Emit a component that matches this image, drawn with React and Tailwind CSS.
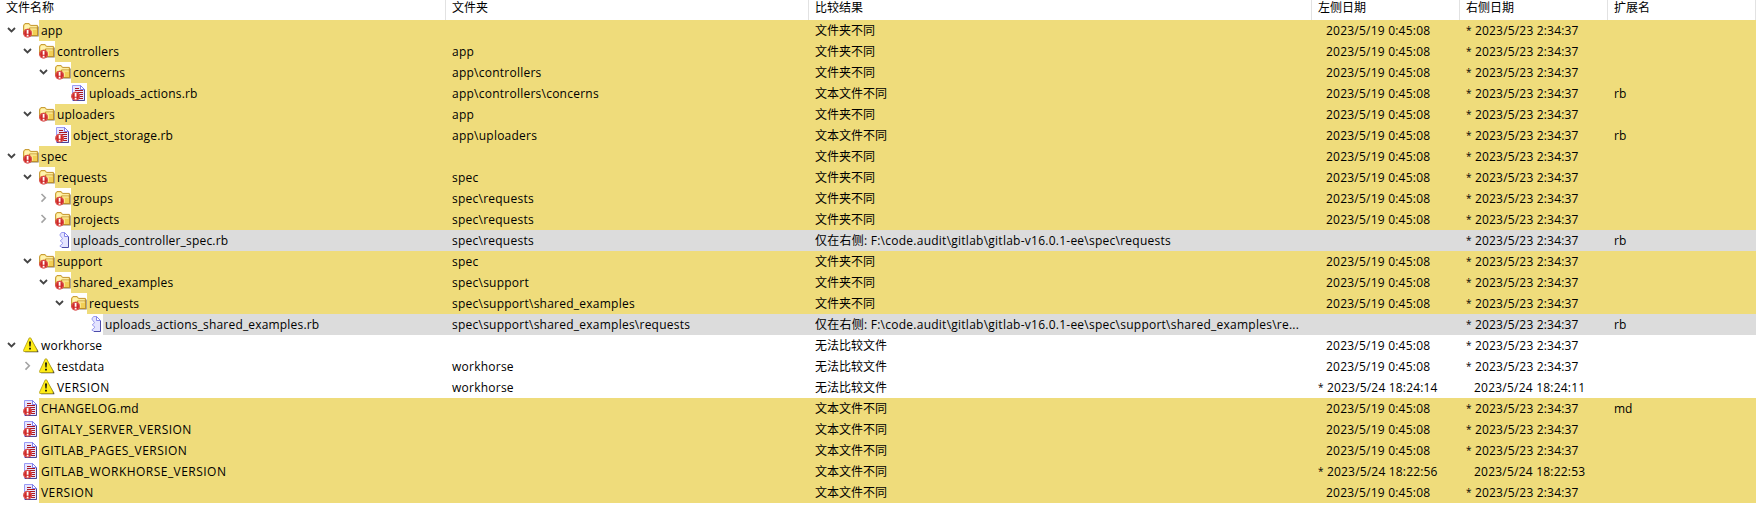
const L = '2023/5/19 0:45:08';
const R = '* 2023/5/23 2:34:37';
const DIR = '文件夹不同';
const TXT = '文本文件不同';
const NOCMP = '无法比较文件';
const ONLY = '仅在右侧: F:\\code.audit\\gitlab\\gitlab-v16.0.1-ee\\spec\\';

// depth, toggle, icon, name, folder, result, left date, right date, extension
const rows = [
  [0, 'open', 'folder', 'app', '', DIR, L, R, ''],
  [1, 'open', 'folder', 'controllers', 'app', DIR, L, R, ''],
  [2, 'open', 'folder', 'concerns', 'app\\controllers', DIR, L, R, ''],
  [3, '', 'text', 'uploads_actions.rb', 'app\\controllers\\concerns', TXT, L, R, 'rb'],
  [1, 'open', 'folder', 'uploaders', 'app', DIR, L, R, ''],
  [2, '', 'text', 'object_storage.rb', 'app\\uploaders', TXT, L, R, 'rb'],
  [0, 'open', 'folder', 'spec', '', DIR, L, R, ''],
  [1, 'open', 'folder', 'requests', 'spec', DIR, L, R, ''],
  [2, 'closed', 'folder', 'groups', 'spec\\requests', DIR, L, R, ''],
  [2, 'closed', 'folder', 'projects', 'spec\\requests', DIR, L, R, ''],
  [2, '', 'single', 'uploads_controller_spec.rb', 'spec\\requests', ONLY + 'requests', '', R, 'rb'],
  [1, 'open', 'folder', 'support', 'spec', DIR, L, R, ''],
  [2, 'open', 'folder', 'shared_examples', 'spec\\support', DIR, L, R, ''],
  [3, 'open', 'folder', 'requests', 'spec\\support\\shared_examples', DIR, L, R, ''],
  [4, '', 'single', 'uploads_actions_shared_examples.rb', 'spec\\support\\shared_examples\\requests', ONLY + 'support\\shared_examples\\re...', '', R, 'rb'],
  [0, 'open', 'warning', 'workhorse', '', NOCMP, L, R, ''],
  [1, 'closed', 'warning', 'testdata', 'workhorse', NOCMP, L, R, ''],
  [1, '', 'warning', 'VERSION', 'workhorse', NOCMP, '* 2023/5/24 18:24:14', '2023/5/24 18:24:11', ''],
  [0, '', 'text', 'CHANGELOG.md', '', TXT, L, R, 'md'],
  [0, '', 'text', 'GITALY_SERVER_VERSION', '', TXT, L, R, ''],
  [0, '', 'text', 'GITLAB_PAGES_VERSION', '', TXT, L, R, ''],
  [0, '', 'text', 'GITLAB_WORKHORSE_VERSION', '', TXT, '* 2023/5/24 18:22:56', '2023/5/24 18:22:53', ''],
  [0, '', 'text', 'VERSION', '', TXT, L, R, ''],
];

const indents = ['w-0', 'w-4', 'w-8', 'w-12', 'w-16'];
const fills = { folder: 'bg-[#efdc7b]', text: 'bg-[#efdc7b]', single: 'bg-[#dcdcdc]', warning: 'bg-white' };

function Badge() {
  return (
    <g>
      <circle cx="4.6" cy="11.2" r="4.4" fill="#cf2a2a" />
      <circle cx="4.6" cy="11.2" r="3.9" fill="none" stroke="#e87570" strokeWidth=".6" />
      <path d="M3.7 8h1.8v3.8H3.7zM3.7 12.8h1.8v1.6H3.7z" fill="#fff" />
    </g>
  );
}

function Icon({ kind }) {
  const cls = 'block h-4 w-4 shrink-0';
  if (kind === 'folder') {
    return (
      <svg className={cls} viewBox="0 0 16 16">
        <path d="M14 4.5h1.7v10H5v-1h9z" fill="#8b8064" />
        <path d="M.6 11V3.2L1.9 1.6h4.3l1.3 1.8h6.9v10H2z" fill="#f6da70" stroke="#c4962d" strokeWidth="1" />
        <path d="M1.5 4.5 2.4 2.5h3.4L7 4.2h6.6v1.2H6L4.5 7h-3z" fill="#fff3ae" />
        <path d="M6.5 6h8v7.5H6z" fill="#f2cf55" stroke="#b88624" strokeWidth=".8" />
        <path d="M7.3 7h6.3" stroke="#fff5b5" strokeWidth="1" />
        <path d="M8 8.2h2v4.5H8z" fill="#fae98f" />
        <Badge />
      </svg>
    );
  }
  if (kind === 'text') {
    return (
      <svg className={cls} viewBox="0 0 16 16">
        <path d="M1.5.5h8l4 4v11h-12z" fill="#e6e6ff" stroke="#9a9af4" />
        <path d="M13.5 4.5v11H2" fill="none" stroke="#4c4796" />
        <path d="M9.5.5v4h4z" fill="#fff" stroke="#7474e8" strokeWidth=".9" />
        <path d="M4 3.5h4M4 5.5h8M4 7.5h8M6 9.5h6M8 11.5h4M8 13.5h4" stroke="#a91722" strokeWidth="1" />
        <Badge />
      </svg>
    );
  }
  if (kind === 'single') {
    return (
      <svg className={cls} viewBox="0 0 16 16">
        <path d="M4.8 3 6.5.5h3l4 4v11H7L4.8 14l3.2-2.8L5.2 8.8 7.6 6.8z" fill="#e4e4ff" />
        <path d="M7 15.5 4.8 14l3.2-2.8L5.2 8.8l2.4-2L4.8 3 6.5.5h3" fill="none" stroke="#9c9cf0" />
        <path d="M13.5 4.5v11H7" fill="none" stroke="#4c4ca8" />
        <path d="M9.5.5v4h4z" fill="#fff" stroke="#7a7ae8" strokeWidth=".9" />
      </svg>
    );
  }
  return (
    <svg className={cls} viewBox="0 0 16 16">
      <path d="M8 2.2 15.3 14v1.3H2z" fill="#555243" />
      <path d="M6.2.9h1.5l6.5 12.4-.7 1.2H.8l-.4-1z" fill="#ffec16" stroke="#ac9c12" strokeWidth=".8" />
      <path d="M6 4.6h2l-.4 5H6.4zM6.1 10.7h1.8v1.8H6.1z" fill="#17150a" />
    </svg>
  );
}

function Toggle({ state }) {
  return (
    <svg className="block h-4 w-[23px] shrink-0" viewBox="0 0 23 16" fill="none">
      {state === 'open' && <path d="M8 6l3.5 3.5L15 6" stroke="#454545" strokeWidth="1.8" />}
      {state === 'closed' && <path d="M9.5 4l3.8 3.8-3.8 3.8" stroke="#a3a3a3" strokeWidth="1.6" />}
    </svg>
  );
}

const headers = ['文件名称', '文件夹', '比较结果', '左侧日期', '右侧日期', '扩展名'];
const grid = 'grid grid-cols-[446px_363px_503px_148px_148px_148px]';

function nameTracking(name) {
  if (name === 'CHANGELOG.md') return 'tracking-[0.3px]';
  return name === name.toUpperCase() ? 'tracking-[0.46px]' : 'tracking-[0.18px]';
}

function DateCell({ value }) {
  const starred = value.startsWith('*');
  return (
    <div className="flex pl-1.5">
      {starred && <span className="w-[9px] shrink-0 text-[10px]">*</span>}
      <span className={starred ? 'tracking-[0.18px]' : 'pl-2 tracking-[0.22px]'}>{value.replace('* ', '')}</span>
    </div>
  );
}

export default function App() {
  return (
    <div className="h-[506px] w-[1758px] overflow-hidden bg-white font-['Open_Sans','Noto_Sans_CJK_SC',sans-serif] text-[12px] leading-[21px] whitespace-pre text-black">
      <div className={`${grid} h-5 leading-4`}>
        {headers.map((h) => (
          <div key={h} className="border-r border-[#e2e2e2] pl-1.5">{h}</div>
        ))}
      </div>
      {rows.map(([depth, toggle, icon, name, folder, result, left, right, ext], i) => (
        <div key={i} className={`${grid} h-[21px]`}>
          <div className="flex">
            <div className={`${indents[depth]} shrink-0`} />
            <div className="flex shrink-0 pt-0.5">
              <Toggle state={toggle} />
              <Icon kind={icon} />
            </div>
            <div className={`${fills[icon]} ${nameTracking(name)} grow pl-0.5`}>{name}</div>
          </div>
          <div className={`${fills[icon]} pl-1.5 tracking-[0.24px]`}>{folder}</div>
          <div className={`${fills[icon]} pl-1.5 ${icon === 'single' ? 'tracking-[0.25px]' : ''}`}>{result}</div>
          <div className={fills[icon]}><DateCell value={left} /></div>
          <div className={fills[icon]}><DateCell value={right} /></div>
          <div className={`${fills[icon]} pl-1.5`}>{ext}</div>
        </div>
      ))}
    </div>
  );
}
